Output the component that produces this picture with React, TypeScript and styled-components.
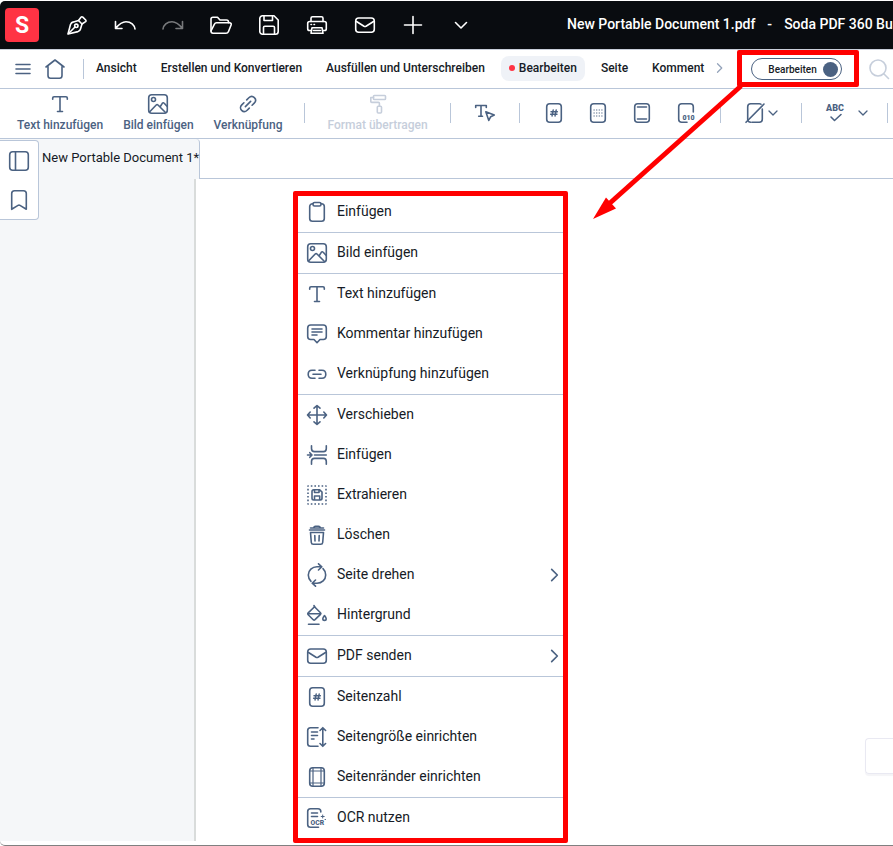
import React from "react";
import styled, { createGlobalStyle, css } from "styled-components";

const color = {
  ink: "#090c10",
  text: "#161b26",
  slate: "#4b6282",
  line: "#b9c6d9",
  faint: "#c6cedb",
  panel: "#f5f7f9",
  chip: "#eff2f7",
  red: "#ff3344",
  mark: "#ff0000",
};

const GlobalStyle = createGlobalStyle`
  * { box-sizing: border-box; }
  body {
    margin: 0;
    background: #fff;
    color: ${color.text};
    font-family: Roboto, "Liberation Sans", sans-serif;
    overflow: hidden;
  }
  button {
    font: inherit;
    color: inherit;
    background: none;
    border: 0;
    padding: 0;
    cursor: pointer;
  }
`;

/* ---------- icons ---------- */

const Svg = styled.svg`
  display: block;
  flex: none;
  fill: none;
  stroke: currentColor;
  stroke-width: 1.6;
  stroke-linecap: round;
  stroke-linejoin: round;

  text {
    fill: currentColor;
    stroke: none;
    font-family: Roboto, sans-serif;
    font-weight: 900;
  }
`;

const paths = {
  pen: (
    <>
      <path d="M3 21 5.500 11.500C6 10 7 9.200 8.500 8.900L13.500 7.500 17 11 15.500 16C15.200 17.300 14.300 18.200 13 18.600Z" />
      <path d="M13.500 7.500 16 4.200C16.500 3.600 17.300 3.600 17.800 4.100L20.700 7C21.200 7.500 21.100 8.200 20.600 8.600L17 11" />
      <path d="M3.500 20.500 10 14" />
      <circle cx="11.300" cy="12.800" r="1.700" />
    </>
  ),
  undo: <path d="M2.500 8.500V15.500H9M2.800 15.200C6.500 10.500 9.500 8.700 13 8.700 18 8.700 21.500 12 22 16" />,
  redo: <path d="M21.500 8.500V15.500H15M21.200 15.200C17.500 10.500 14.500 8.700 11 8.700 6 8.700 2.500 12 2 16" />,
  folder: (
    <>
      <path d="M2 18V6C2 4.900 2.900 4.200 4 4.200H8.500L11 7H17.500C18.600 7 19.500 7.900 19.500 9V9.800" />
      <path d="M2 18 5.300 11.300C5.800 10.300 6.500 9.800 7.600 9.800H20.500C22 9.800 22.600 10.800 22.100 12L19.500 18.500C19 19.700 18.200 20.200 17 20.200H4C2.800 20.200 2 19.300 2 18Z" />
    </>
  ),
  save: (
    <>
      <path d="M2.800 5.500C2.800 4 4 2.800 5.500 2.800H17L21.200 7V18.500C21.200 20 20 21.200 18.500 21.200H5.500C4 21.200 2.800 20 2.800 18.500Z" />
      <path d="M7 3V7.500H15.500V3M6.500 21V14.500C6.500 13.700 7 13.200 7.800 13.200H16.200C17 13.200 17.500 13.700 17.500 14.500V21" />
    </>
  ),
  print: (
    <>
      <path d="M6 8.500V5.200C6 4.300 6.600 3.700 7.500 3.700H16.500C17.400 3.700 18 4.300 18 5.200V8.500" />
      <path d="M6 17.500H4.500C3.400 17.500 2.700 16.800 2.700 15.700V10.500C2.700 9.300 3.500 8.500 4.700 8.500H19.300C20.500 8.500 21.300 9.300 21.300 10.500V15.700C21.300 16.800 20.600 17.500 19.500 17.500H18" />
      <path d="M7 14.700H17L18 20.300H6ZM6 11.500H6.500M9 11.500H9.500M8.500 17.500H15.500" />
    </>
  ),
  mail: (
    <>
      <rect x="2.700" y="5" width="18.600" height="14.200" rx="3" />
      <path d="M3.500 8.500 11 13.200C11.700 13.600 12.300 13.600 13 13.200L20.500 8.500" />
    </>
  ),
  plus: <path d="M12 3.500V20.500M3.500 12H20.500" />,
  chevronDown: <path d="M6.500 9.500 12 15 17.500 9.500" />,
  caretDown: <path d="M4 8 12 16 20 8" strokeWidth="2.600" />,
  caretRight: <path d="M7 3.500 15.500 12 7 20.500" strokeWidth="2.500" />,
  menu: <path d="M5 7.500H19M5 12H19M5 16.500H19" />,
  home: <path d="M3 10 12 3 21 10M5 9.500V18.500C5 20 6 21.200 7.500 21.200H16.500C18 21.200 19 20 19 18.500V9.500" />,
  search: (
    <>
      <circle cx="11" cy="11" r="8" />
      <path d="M17 17 21.500 21.500" />
    </>
  ),
  text: <path d="M4.700 7.200V6C4.700 5.300 5.200 4.800 6 4.800H18C18.800 4.800 19.300 5.300 19.300 6V7.200M12 4.800V19.500M9.500 19.500H14.500" />,
  image: (
    <>
      <rect x="2.700" y="2.700" width="18.600" height="18.600" rx="3" />
      <circle cx="7.500" cy="7.500" r="2" />
      <path d="M3.500 20 10.200 13C10.800 12.400 11.400 12.400 12 13L19.500 20.500M14 15 16.300 11.300C16.900 10.500 17.600 10.500 18.200 11.200L21 14.300" />
    </>
  ),
  chain: <path d="M10 8.200H7C4.700 8.200 3.200 9.900 3.200 12.200 3.200 14.500 4.700 16.200 7 16.200H10M14 8.200H17C19.300 8.200 20.800 9.900 20.800 12.200 20.800 14.500 19.300 16.200 17 16.200H14M8 12.200H16" />,
  chainTilted: (
    <g transform="rotate(-45 12 12)">
      <path d="M10 8.200H7C4.700 8.200 3 9.800 3 12 3 14.200 4.700 15.800 7 15.800H10M14 8.200H17C19.300 8.200 21 9.800 21 12 21 14.200 19.300 15.800 17 15.800H14M8.300 12H15.700" />
    </g>
  ),
  roller: (
    <>
      <rect x="7.500" y="3.500" width="12" height="4" rx="0.800" />
      <path d="M7.500 5.500H4.800V9.500C4.800 10 5.200 10.400 5.700 10.400H12.500C13 10.400 13.400 10.800 13.400 11.300V14" />
      <rect x="11.300" y="14.300" width="4.200" height="6.700" rx="1" />
    </>
  ),
  textSelect: (
    <>
      <path d="M2.700 6.500V4.500H13.300V6.500M8 4.500V15.300M5.700 15.300H9.500" />
      <path d="M12.800 10.800 21.300 14 17.700 15.700 15.800 19.500Z" />
    </>
  ),
  pageNumber: (
    <>
      <rect x="4.700" y="2.700" width="14.600" height="18.600" rx="3" />
      <path d="M11.200 9 10 15M14.200 9 13 15M9 10.800H15.400M8.600 13.300H15" strokeWidth="1.400" />
    </>
  ),
  pageDots: (
    <>
      <rect x="4.700" y="2.700" width="14.600" height="18.600" rx="3" />
      <path
        d="M7.500 9H16.500M7.500 12H16.500M7.500 15H16.500"
        strokeWidth="1.200"
        strokeLinecap="butt"
        strokeDasharray="1.200 1.400"
      />
    </>
  ),
  pageBands: (
    <>
      <rect x="4.700" y="2.700" width="14.600" height="18.600" rx="3" />
      <path d="M7.500 6H16.500M7.500 18H16.500" />
    </>
  ),
  pageBates: (
    <>
      <path d="M8.500 21.300H7.700C6 21.300 4.700 20 4.700 18.300V5.700C4.700 4 6 2.700 7.700 2.700H16.300C18 2.700 19.300 4 19.300 5.700V11M8.500 21.300H13" />
      <text x="8.500" y="18.500" fontSize="7">010</text>
    </>
  ),
  pageOff: (
    <>
      <path d="M7.700 21.300C6 21.300 4.700 20 4.700 18.300V5.700C4.700 4 6 2.700 7.700 2.700H16.300C17 2.700 17.600 2.900 18 3.300M19.300 8V18.300C19.300 20 18 21.300 16.300 21.300H9" />
      <path d="M3 21.300 21 3" />
    </>
  ),
  spell: (
    <>
      <text x="2" y="9.500" fontSize="9">ABC</text>
      <path d="M7 16 10.500 19.500 17 13.500" />
    </>
  ),
  panel: (
    <>
      <rect x="2.700" y="2.700" width="18.600" height="18.600" rx="3" />
      <path d="M8.500 3V21" />
    </>
  ),
  bookmark: <path d="M4.700 21.300V5.500C4.700 3.900 5.900 2.700 7.500 2.700H16.500C18.100 2.700 19.300 3.900 19.300 5.500V21.300L13 17.400C12.300 17 11.700 17 11 17.400Z" />,
  clipboard: (
    <>
      <path d="M8 3.700H7.500C5.900 3.700 4.700 4.900 4.700 6.500V18.500C4.700 20.100 5.900 21.300 7.500 21.300H16.500C18.100 21.300 19.300 20.100 19.300 18.500V6.500C19.300 4.900 18.100 3.700 16.500 3.700H16" />
      <rect x="8" y="2.500" width="8" height="3.500" rx="1.500" />
    </>
  ),
  comment: (
    <>
      <path d="M5.700 3H18.300C20 3 21.300 4.300 21.300 6V14.500C21.300 16.200 20 17.500 18.300 17.500H15L12 20.700 9 17.500H5.700C4 17.500 2.700 16.200 2.700 14.500V6C2.700 4.300 4 3 5.700 3Z" />
      <path d="M7 7H17M7 10H17M7 13H12" />
    </>
  ),
  move: <path d="M12 2.700V21.300M2.700 12H21.300M9 5.200 12 2.500 15 5.200M9 18.800 12 21.500 15 18.800M5.200 9 2.500 12 5.200 15M18.800 9 21.500 12 18.800 15" />,
  insert: (
    <>
      <path d="M6.500 2.700V5.500C6.500 7.500 7.500 8.600 9.500 8.600H18.500C20.300 8.600 21.300 7.500 21.300 5.500V2.700M6.500 21.300V18.500C6.500 16.500 7.500 15.400 9.500 15.400H18.500C20.300 15.400 21.300 16.500 21.300 18.500V21.300" />
      <path d="M2.500 12H6.500M4.800 9.700 7 12 4.800 14.300M9.500 12H21.300" />
    </>
  ),
  extract: (
    <>
      <rect x="3" y="3" width="18" height="18" strokeWidth="1.600" strokeLinecap="butt" strokeDasharray="1.600 2" strokeDashoffset="0.800" />
      <path d="M7 8.500C7 7.500 7.700 6.800 8.700 6.800H14.700L17 9V15.300C17 16.300 16.300 17 15.300 17H8.700C7.700 17 7 16.300 7 15.300ZM9.500 7V9.500H14V7M9.500 17V13H14.700V17" />
    </>
  ),
  trash: (
    <path d="M4.500 7H19.500M5.500 5H18.500M8.800 5C8.800 4 9.500 3.200 10.500 3.200H13.500C14.500 3.200 15.200 4 15.200 5M5.500 9.500 6.300 19.500C6.400 20.600 7.200 21.300 8.300 21.300H15.700C16.800 21.300 17.600 20.600 17.700 19.500L18.500 9.500M5.500 9.500H18.500M9.800 12.500 10 18M14.200 12.500 14 18" />
  ),
  rotate: (
    <path d="M6 18.300C4.300 16.700 3.300 14.500 3.300 12 3.300 7.300 7.200 3.800 12 3.800H16.500M13.500 0.800 16.800 3.800 13.500 7M18 5.700C19.700 7.300 20.700 9.500 20.700 12 20.700 16.700 16.800 20.200 12 20.200H7.500M10.500 17 7.200 20.200 10.500 23.200" />
  ),
  fill: (
    <>
      <path d="M9 3.300 15.500 9.800C16 10.300 16 10.900 15.500 11.400L10 16.700C9.400 17.200 8.800 17.200 8.200 16.700L3.200 11.700C2.600 11.100 2.600 10.500 3.200 9.900L9.800 3.500M3 10.800H15.500M9 3.300V2.500M3.500 21.200H14" />
      <path d="M19.500 12.500C20.700 14 21.200 14.900 21.200 15.700A1.700 1.700 0 0 1 17.800 15.700C17.800 14.900 18.300 14 19.500 12.500Z" />
    </>
  ),
  pageSize: (
    <>
      <path d="M13 2.700H5.500C3.900 2.700 2.700 3.900 2.700 5.500V18.500C2.700 20.100 3.900 21.300 5.500 21.300H13M6.500 7H12.500M6.500 10.500H12.500M6.500 14H9" />
      <path d="M17.800 3V21M15 5.500 17.800 2.700 20.600 5.500M15 18.500 17.800 21.300 20.600 18.500" />
    </>
  ),
  margins: (
    <>
      <rect x="4.700" y="2.700" width="14.600" height="18.600" rx="3" />
      <path d="M8 3V21M16 3V21M5 6H19M5 18H19" strokeWidth="1.200" />
    </>
  ),
  ocr: (
    <>
      <path d="M13.500 21.300H5.500C3.900 21.300 2.700 20.100 2.700 18.500V5.500C2.700 3.900 3.900 2.700 5.500 2.700H13C14.600 2.700 15.800 3.900 15.800 5.500V6M6.500 7H12.500M6.500 10.500H12.500" />
      <path d="M17.700 9V12M16.200 10.500H19.200M20 13.500H20.500" strokeWidth="1" />
      <text x="5.500" y="18.800" fontSize="6.800">OCR</text>
    </>
  ),
};

type IconName = keyof typeof paths;

function Icon({ name, size = 24 }: { name: IconName; size?: number }) {
  return (
    <Svg width={size} height={size} viewBox="0 0 24 24" aria-hidden="true">
      {paths[name]}
    </Svg>
  );
}

/* ---------- window ---------- */

const Window = styled.div`
  display: flex;
  flex-direction: column;
  min-height: 100vh;
  padding: 1px 0 4px;
  border-bottom: 1px solid #808080;
  border-bottom-left-radius: 5px;
  overflow: hidden;
`;

const TitleBar = styled.header`
  display: flex;
  align-items: center;
  height: 49px;
  padding-left: 5px;
  background: ${color.ink};
  border-bottom: 1px solid #c9cfda;
  border-top-left-radius: 5px;
  color: #fff;
  white-space: nowrap;
  overflow: hidden;
`;

const Logo = styled.div`
  display: grid;
  place-items: center;
  flex: none;
  width: 34px;
  height: 34px;
  margin-right: 14px;
  border-radius: 4px;
  background: ${color.red};
  font-size: 23px;
  font-weight: 700;
`;

const QuickButton = styled.button`
  display: grid;
  place-items: center;
  flex: none;
  width: 48px;
  height: 48px;

  &:disabled {
    opacity: 0.45;
  }
`;

const Title = styled.h1`
  display: flex;
  gap: 12px;
  margin: 0;
  padding: 0 0 2px 82px;
  font-size: 14px;
  font-weight: 500;
  line-height: 20px;
`;

/* ---------- navigation ---------- */

const NavBar = styled.nav`
  display: flex;
  align-items: center;
  height: 39px;
  padding-left: 11px;
  border-bottom: 1px solid ${color.line};
  white-space: nowrap;
`;

const GlyphButton = styled.button`
  display: grid;
  place-items: center;
  flex: none;
  color: ${color.slate};
`;

const HomeButton = styled(GlyphButton)`
  margin-left: 8px;
`;

const MoreTabsButton = styled(GlyphButton)`
  padding: 0 2px 2px;
  color: #94a3ba;
`;

const SearchButton = styled(GlyphButton)`
  color: ${color.faint};
`;

const Divider = styled.span<{ $gap: number }>`
  flex: none;
  width: 1px;
  height: 20px;
  margin: 0 ${(p) => p.$gap}px;
  background: ${color.line};
`;

const NavTabs = styled.div`
  display: flex;
  gap: 8px;
  margin-left: -12px;
`;

const NavTab = styled.button<{ $active?: boolean }>`
  display: flex;
  align-items: center;
  gap: 4px;
  height: 25px;
  padding: 0 8px;
  margin-bottom: 2px;
  border-radius: 8px;
  font-size: 12px;
  font-weight: 500;
  ${(p) =>
    p.$active &&
    css`
      background: ${color.chip};
      &::before {
        content: "";
        width: 6px;
        height: 6px;
        border-radius: 50%;
        background: ${color.red};
      }
    `}
`;

const ModeSwitch = styled.div`
  position: relative;
  flex: none;
  margin: 0 25px 0 23px;
`;

const SwitchButton = styled.button`
  display: flex;
  align-items: center;
  gap: 6px;
  height: 22px;
  padding: 0 3px 0 16px;
  border: 1px solid ${color.slate};
  border-radius: 11px;
  font-size: 10px;
  font-weight: 500;

  &::after {
    content: "";
    width: 15px;
    height: 15px;
    border-radius: 50%;
    background: ${color.slate};
  }
`;

const Marker = styled.span`
  position: absolute;
  z-index: 3;
  border: 5px solid ${color.mark};
  border-radius: 2px;
  pointer-events: none;
`;

const SwitchMarker = styled(Marker)`
  inset: -8px -17px -7px -14px;
`;

const MenuMarker = styled(Marker)`
  inset: -1px -5px -5px;
`;

const Arrow = styled.svg`
  position: absolute;
  z-index: 3;
  top: 26px;
  left: -159px;
  pointer-events: none;
`;

/* ---------- toolbar ---------- */

const Toolbar = styled.div`
  display: flex;
  align-items: center;
  height: 50px;
  padding: 0 0 1px 7px;
  border-bottom: 1px solid ${color.line};
  color: ${color.slate};
  white-space: nowrap;
`;

const LabelTool = styled.button`
  display: flex;
  flex-direction: column;
  align-items: center;
  flex: none;
  padding: 0 10px;
  font-size: 12px;
  font-weight: 500;
  line-height: 18px;

  &:disabled {
    color: ${color.faint};
  }
`;

const IconTool = styled.button<{ $gap?: number }>`
  display: flex;
  align-items: center;
  flex: none;
  gap: ${(p) => p.$gap ?? 0}px;
  padding: 0 10px;
`;

/* ---------- workspace ---------- */

const Workspace = styled.div`
  position: relative;
  display: flex;
  flex: 1;
  flex-direction: column;
`;

const TabStrip = styled.div`
  display: flex;
  height: 40px;

  &::after {
    content: "";
    flex: 1;
    border-bottom: 1px solid ${color.line};
  }
`;

const DocumentTab = styled.button`
  padding: 0 0 3px 42px;
  background: ${color.panel};
  border-right: 1px solid ${color.line};
  border-top-right-radius: 4px;
  font-size: 13px;
  white-space: nowrap;
`;

const Rail = styled.aside`
  position: absolute;
  top: 1px;
  left: 0;
  display: flex;
  flex-direction: column;
  border: 1px solid ${color.line};
  border-left: 0;
  border-radius: 0 4px 4px 0;
  background: #fff;
  color: ${color.slate};
`;

const RailButton = styled.button`
  display: grid;
  place-items: center;
  width: 38px;
  height: 39px;
`;

const Body = styled.div`
  display: flex;
  flex: 1;
`;

const Sidebar = styled.div`
  flex: none;
  width: 196px;
  background: ${color.panel};
  border-right: 2px solid #d9dcdb;
`;

const Canvas = styled.main`
  position: relative;
  flex: 1;
`;

const ContextMenu = styled.div`
  position: absolute;
  top: 13px;
  left: 102px;
  width: 265px;
  background: #fff;
`;

const MenuGroup = styled.div`
  & + & {
    border-top: 1px solid ${color.line};
  }
`;

const MenuItem = styled.button`
  display: flex;
  align-items: center;
  gap: 8px;
  width: 100%;
  height: 40px;
  padding: 0 0 0 7px;
  font-size: 14px;
  text-align: left;

  svg {
    color: ${color.slate};
  }
`;

const MenuLabel = styled.span`
  flex: 1;
  padding-bottom: 2px;
`;

const FloatingPanel = styled.div`
  position: absolute;
  right: 0;
  bottom: 67px;
  width: 28px;
  height: 36px;
  border: 1px solid #e9e9f2;
  border-right: 0;
  border-radius: 4px 0 0 4px;
  box-shadow: 0 2px 1px #f4f4f7;
`;

/* ---------- data ---------- */

const quickActions: { icon: IconName; label: string; disabled?: boolean }[] = [
  { icon: "pen", label: "Signieren" },
  { icon: "undo", label: "Rückgängig" },
  { icon: "redo", label: "Wiederholen", disabled: true },
  { icon: "folder", label: "Öffnen" },
  { icon: "save", label: "Speichern" },
  { icon: "print", label: "Drucken" },
  { icon: "mail", label: "Senden" },
  { icon: "plus", label: "Neu" },
  { icon: "chevronDown", label: "Mehr" },
];

const navTabs = [
  "Ansicht",
  "Erstellen und Konvertieren",
  "Ausfüllen und Unterschreiben",
  "Bearbeiten",
  "Seite",
  "Komment",
];

const pageTools: { icon: IconName; label: string }[] = [
  { icon: "pageNumber", label: "Seitenzahl" },
  { icon: "pageDots", label: "Wasserzeichen" },
  { icon: "pageBands", label: "Kopf- und Fußzeile" },
  { icon: "pageBates", label: "Bates-Nummerierung" },
];

type Entry = { icon: IconName; label: string; submenu?: boolean };

const menuGroups: Entry[][] = [
  [{ icon: "clipboard", label: "Einfügen" }],
  [{ icon: "image", label: "Bild einfügen" }],
  [
    { icon: "text", label: "Text hinzufügen" },
    { icon: "comment", label: "Kommentar hinzufügen" },
    { icon: "chain", label: "Verknüpfung hinzufügen" },
  ],
  [
    { icon: "move", label: "Verschieben" },
    { icon: "insert", label: "Einfügen" },
    { icon: "extract", label: "Extrahieren" },
    { icon: "trash", label: "Löschen" },
    { icon: "rotate", label: "Seite drehen", submenu: true },
    { icon: "fill", label: "Hintergrund" },
  ],
  [{ icon: "mail", label: "PDF senden", submenu: true }],
  [
    { icon: "pageNumber", label: "Seitenzahl" },
    { icon: "pageSize", label: "Seitengröße einrichten" },
    { icon: "margins", label: "Seitenränder einrichten" },
  ],
  [{ icon: "ocr", label: "OCR nutzen" }],
];

export default function App() {
  return (
    <>
      <GlobalStyle />
      <Window>
        <TitleBar>
          <Logo>S</Logo>
          {quickActions.map((a) => (
            <QuickButton key={a.icon} aria-label={a.label} disabled={a.disabled}>
              <Icon name={a.icon} />
            </QuickButton>
          ))}
          <Title>
            <span>New Portable Document 1.pdf</span>
            <span>-</span>
            <span>Soda PDF 360 Business</span>
          </Title>
        </TitleBar>

        <NavBar>
          <GlyphButton aria-label="Menü">
            <Icon name="menu" />
          </GlyphButton>
          <HomeButton aria-label="Start">
            <Icon name="home" />
          </HomeButton>
          <Divider $gap={16} />
          <NavTabs>
            {navTabs.map((t) => (
              <NavTab key={t} $active={t === "Bearbeiten"}>
                {t}
              </NavTab>
            ))}
          </NavTabs>
          <MoreTabsButton aria-label="Weitere Reiter">
            <Icon name="caretRight" size={12} />
          </MoreTabsButton>
          <ModeSwitch>
            <SwitchButton role="switch" aria-checked="true">
              Bearbeiten
            </SwitchButton>
            <SwitchMarker />
            <Arrow width="152" height="136" viewBox="0 0 152 136" aria-hidden="true">
              <path d="M149 2 18 119" stroke={color.mark} strokeWidth="5" />
              <path d="M1 135 14 113.500 19 119 24 124.500Z" fill={color.mark} />
            </Arrow>
          </ModeSwitch>
          <SearchButton aria-label="Suchen">
            <Icon name="search" />
          </SearchButton>
        </NavBar>

        <Toolbar>
          <LabelTool>
            <Icon name="text" />
            Text hinzufügen
          </LabelTool>
          <LabelTool>
            <Icon name="image" />
            Bild einfügen
          </LabelTool>
          <LabelTool>
            <Icon name="chainTilted" />
            Verknüpfung
          </LabelTool>
          <Divider $gap={12} />
          <LabelTool disabled>
            <Icon name="roller" />
            Format übertragen
          </LabelTool>
          <Divider $gap={12} />
          <IconTool aria-label="Text auswählen">
            <Icon name="textSelect" />
          </IconTool>
          <Divider $gap={12} />
          {pageTools.map((t) => (
            <IconTool key={t.icon} aria-label={t.label}>
              <Icon name={t.icon} />
            </IconTool>
          ))}
          <Divider $gap={12} />
          <IconTool aria-label="Entfernen">
            <Icon name="pageOff" />
            <Icon name="caretDown" size={12} />
          </IconTool>
          <Divider $gap={12} />
          <IconTool $gap={9} aria-label="Rechtschreibung">
            <Icon name="spell" />
            <Icon name="caretDown" size={12} />
          </IconTool>
          <Divider $gap={8} />
        </Toolbar>

        <Workspace>
          <TabStrip>
            <DocumentTab>New Portable Document 1*</DocumentTab>
          </TabStrip>
          <Body>
            <Sidebar />
            <Canvas>
              <ContextMenu role="menu">
                {menuGroups.map((group, i) => (
                  <MenuGroup key={i} role="group">
                    {group.map((item) => (
                      <MenuItem key={item.label} role="menuitem">
                        <Icon name={item.icon} />
                        <MenuLabel>{item.label}</MenuLabel>
                        {item.submenu && <Icon name="caretRight" size={16} />}
                      </MenuItem>
                    ))}
                  </MenuGroup>
                ))}
                <MenuMarker />
              </ContextMenu>
              <FloatingPanel />
            </Canvas>
          </Body>
          <Rail>
            <RailButton aria-label="Seitenleiste">
              <Icon name="panel" />
            </RailButton>
            <RailButton aria-label="Lesezeichen">
              <Icon name="bookmark" />
            </RailButton>
          </Rail>
        </Workspace>
      </Window>
    </>
  );
}
